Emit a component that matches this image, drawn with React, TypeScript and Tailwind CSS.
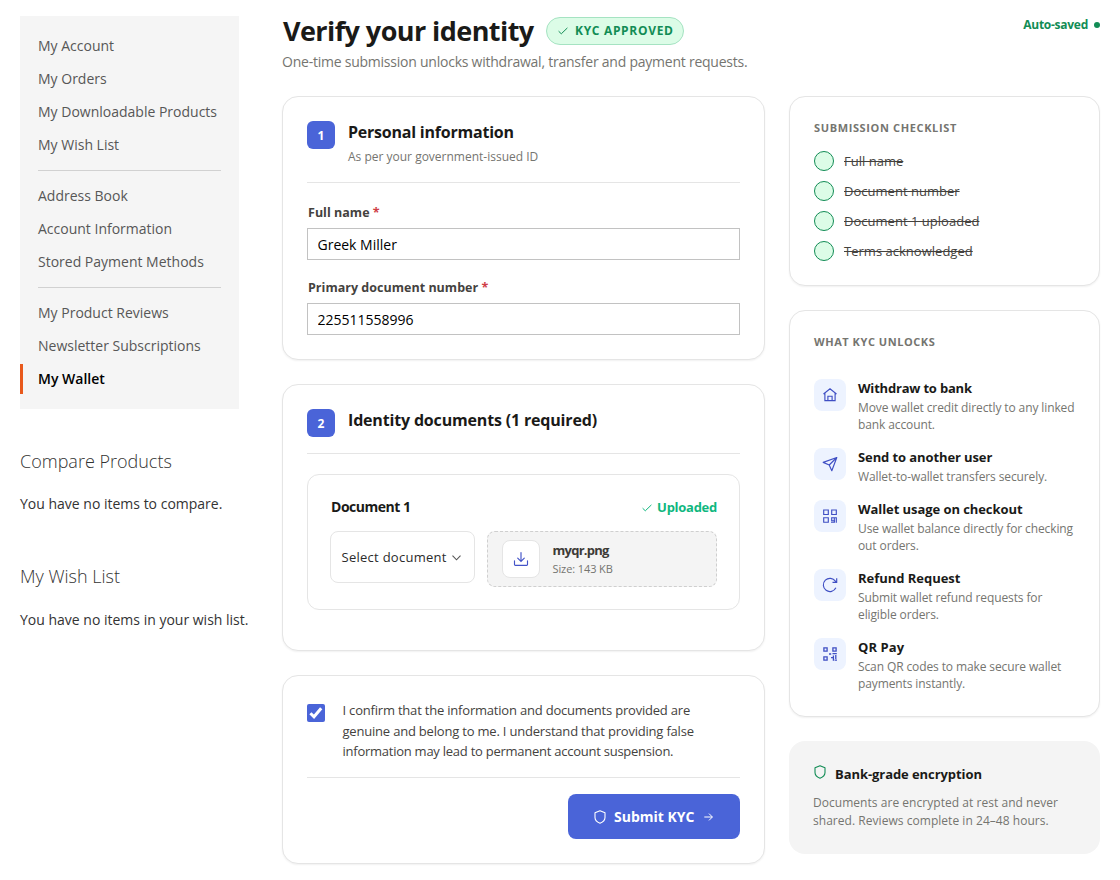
import React from 'react';

const navGroups = [
  ['My Account', 'My Orders', 'My Downloadable Products', 'My Wish List'],
  ['Address Book', 'Account Information', 'Stored Payment Methods'],
  ['My Product Reviews', 'Newsletter Subscriptions', 'My Wallet'],
];

const checklist = ['Full name', 'Document number', 'Document 1 uploaded', 'Terms acknowledged'];

const iconProps = {
  width: 16,
  height: 16,
  viewBox: '0 0 16 16',
  fill: 'none',
  stroke: 'currentColor',
  strokeWidth: 1.15,
};

const HomeIcon = () => (
  <svg {...iconProps}>
    <path d="M1.5 7 8 1.7 14.5 7M2.9 6v7.6h10.2V6M5.9 13.6V9.2h4.2v4.4" />
  </svg>
);

const SendIcon = () => (
  <svg {...iconProps} strokeLinejoin="round">
    <path d="M14.8 1.5 1.2 6.4l6 2.6 2.6 5.7zM14.8 1.5 7.2 9" />
  </svg>
);

const GridIcon = () => (
  <svg {...iconProps}>
    <path d="M1.7 2h4.6v4.5H1.7zM9.7 2h4.6v4.5H9.7zM1.7 9.7h4.6v4.6H1.7z" />
    <path d="M9.1 9.7h5.2v5.1M9.7 9.2v3.6h2.6v-3M9 14.2h3.4v-2" />
  </svg>
);

const RefundIcon = () => (
  <svg {...iconProps}>
    <path d="M13.9 10.8A6.6 6.6 0 1 1 13.4 4.2l1 1M14.7 1.2v4.1h-4.2" />
  </svg>
);

const QrIcon = () => (
  <svg {...iconProps} strokeWidth={1.3}>
    <path d="M1.9 1.9h3.2v3.2H1.9zM10.9 1.9h3.2v3.2h-3.2zM1.9 10.9h3.2v3.2H1.9z" />
    <path d="M7 8h2.2M10.5 7.7h4.3M11.4 9.4v5.4M9 11.6h2.4M13.8 9v4M12.6 14.2h2.4" />
  </svg>
);

const ShieldIcon = ({ size }: { size: number }) => (
  <svg width={size} height={size} viewBox="0 0 14 14" fill="none" stroke="currentColor" strokeWidth="1.1" strokeLinejoin="round">
    <path d="M7 .8 12 2.8v4.6c0 2.8-2 4.6-5 5.8-3-1.2-5-3-5-5.8V2.8z" />
  </svg>
);

const CheckIcon = () => (
  <svg width="10" height="8" viewBox="0 0 10 8" fill="none" stroke="currentColor">
    <path d="M.6 4.2 3.3 6.8 9.4.9" />
  </svg>
);

const unlocks = [
  { icon: HomeIcon, title: 'Withdraw to bank', tracking: 'tracking-[-0.2px]', lines: ['Move wallet credit directly to any linked', 'bank account.'] },
  { icon: SendIcon, title: 'Send to another user', tracking: 'tracking-[-0.1px]', lines: ['Wallet-to-wallet transfers securely.'] },
  { icon: GridIcon, title: 'Wallet usage on checkout', tracking: 'tracking-[-0.07px]', lines: ['Use wallet balance directly for checking', 'out orders.'] },
  { icon: RefundIcon, title: 'Refund Request', tracking: 'tracking-[-0.03px]', lines: ['Submit wallet refund requests for', 'eligible orders.'] },
  { icon: QrIcon, title: 'QR Pay', tracking: 'tracking-[0.1px]', lines: ['Scan QR codes to make secure wallet', 'payments instantly.'] },
];

const Sidebar = () => (
  <aside className="w-[262px] shrink-0 pl-5 pt-4">
    <nav className="w-[219px] bg-[#f5f5f5] py-[15px]">
      {navGroups.map((group, idx) => (
        <div key={idx}>
          {idx > 0 && <div className="mx-[18px] my-[10px] h-px bg-[#d1d1d1]" />}
          <ul className="flex flex-col gap-[3px]">
            {group.map((item) => (
              <li
                key={item}
                className={
                  item === 'My Wallet'
                    ? 'h-[30px] border-l-3 border-[#e8591c] pl-[15px] text-sm leading-[30px] font-semibold text-black'
                    : 'h-[30px] border-l-3 border-transparent pl-[15px] text-sm leading-[30px] text-[#575757]'
                }
              >
                {item}
              </li>
            ))}
          </ul>
        </div>
      ))}
    </nav>
    <section className="mt-10">
      <h2 className="text-lg leading-6 font-light text-[#333]">Compare Products</h2>
      <p className="mt-5 text-sm leading-[22px] text-[#333]">You have no items to compare.</p>
    </section>
    <section className="mt-[49px]">
      <h2 className="text-lg leading-6 font-light text-[#333]">My Wish List</h2>
      <p className="mt-[21px] text-sm leading-[22px] whitespace-nowrap text-[#333]">You have no items in your wish list.</p>
    </section>
  </aside>
);

const Step = ({ n }: { n: number }) => (
  <span className="flex size-7 shrink-0 items-center justify-center rounded-md bg-[#4a64d8] pt-px text-xs font-bold text-white">
    {n}
  </span>
);

const Field = ({ label, value }: { label: string; value: string }) => (
  <div>
    <label className="block h-[17px] pl-px text-[12.5px] leading-[17px] font-bold tracking-[0.02px] text-[#44423e]">
      {label} <span className="text-[#cf3e46]">*</span>
    </label>
    <input
      readOnly
      value={value}
      className="mt-[7px] block h-8 w-full border border-[#c2c2c2] bg-white px-[9.5px] text-sm text-black outline-none"
    />
  </div>
);

const card = 'rounded-2xl border border-[#e5e5e5] bg-white shadow-[0_1px_2px_rgba(0,0,0,0.06)]';

export default function App() {
  return (
    <div className="flex h-[880px] w-[1120px] overflow-hidden bg-white font-['Open_Sans','Noto_Sans',sans-serif]">
      <Sidebar />
      <main className="ml-5 w-[818px]">
        <header className="flex h-24 justify-between pt-4">
          <div>
            <div className="flex h-[30px] items-center gap-3">
              <h1 className="w-[252px] pl-px text-[27px] font-bold tracking-[-0.57px] whitespace-nowrap text-[#1a1a18]">Verify your identity</h1>
              <span className="flex h-7 w-[138px] items-center gap-[7px] rounded-full border border-[#a5e3c2] bg-[#dcfce7] pl-[11px] text-xs font-bold tracking-[0.68px] whitespace-nowrap text-[#128c55]">
                <CheckIcon />
                KYC APPROVED
              </span>
            </div>
            <p className="mt-[6px] text-sm leading-5 tracking-[-0.235px] text-[#757570]">
              One-time submission unlocks withdrawal, transfer and payment requests.
            </p>
          </div>
          <div className="flex h-[17px] items-center gap-[6px] text-xs font-bold tracking-[-0.27px] text-[#128c55]">
            Auto-saved
            <span className="size-[6px] rounded-full bg-[#128c55]" />
          </div>
        </header>

        <div className="flex items-start gap-6">
          <div className="flex w-[483px] flex-col gap-6">
            <section className={`${card} h-[264px] px-6 pt-6`}>
              <div className="flex h-[62px] gap-[13px] border-b border-[#e5e5e5]">
                <Step n={1} />
                <div>
                  <h3 className="text-base leading-[22px] font-bold tracking-[-0.22px] text-[#1a1a18]">Personal information</h3>
                  <p className="mt-[5px] text-xs leading-[18px] text-[#757570]">As per your government-issued ID</p>
                </div>
              </div>
              <div className="mt-[21px] flex flex-col gap-[19px]">
                <Field label="Full name" value="Greek Miller" />
                <Field label="Primary document number" value="225511558996" />
              </div>
            </section>

            <section className={`${card} h-[267px] px-6 pt-6`}>
              <div className="flex h-[45px] gap-[13px] border-b border-[#e5e5e5]">
                <Step n={2} />
                <h3 className="text-base leading-[22px] font-bold tracking-[-0.17px] text-[#1a1a18]">Identity documents (1 required)</h3>
              </div>
              <div className="mt-5 h-[136px] rounded-xl border border-[#e5e5e5] px-[22px] pt-[22px]">
                <div className="flex h-5 items-center justify-between">
                  <h4 className="pl-px text-sm font-bold tracking-[-0.48px] text-[#1a1a18]">Document 1</h4>
                  <span className="flex items-center gap-[5px] pt-px text-[13px] font-bold tracking-[-0.27px] text-[#10b77f]">
                    <CheckIcon />
                    Uploaded
                  </span>
                </div>
                <div className="mt-[14px] flex items-start gap-3">
                  <div className="flex h-[52px] w-[145px] items-center gap-[5px] rounded-lg border border-[#e5e5e5] pl-[10.5px] pt-px text-[13px] tracking-[0.27px] whitespace-nowrap text-[#2b2b2b]">
                    Select document
                    <svg width="9" height="6" viewBox="0 0 9 6" fill="none" stroke="#555" strokeWidth="1.1">
                      <path d="M.5.7 4.5 4.8 8.5.7" />
                    </svg>
                  </div>
                  <div className="flex h-14 w-[230px] items-center gap-[12.5px] rounded-lg border border-dashed border-[#cfcfcf] bg-[#f4f4f4] pl-[14px]">
                    <div className="flex size-[38px] items-center justify-center rounded-lg border border-[#e5e5e5] bg-white text-[#4353c8]">
                      <svg {...iconProps} strokeLinecap="round">
                        <path d="M8 1.5v8.8M4.7 7.2 8 10.4l3.3-3.2M1.5 9.8v3.7c0 .5.3.8.8.8h11.4c.5 0 .8-.3.8-.8V9.8" />
                      </svg>
                    </div>
                    <div className="pt-px">
                      <p className="text-[13px] leading-[17px] font-bold tracking-[-0.75px] text-[#3d3b37]">myqr.png</p>
                      <p className="mt-px text-[11px] leading-[18px] tracking-[-0.1px] text-[#757570]">Size: 143 KB</p>
                    </div>
                  </div>
                </div>
              </div>
            </section>

            <section className={`${card} h-[189px] px-6 pt-[24px]`}>
              <div className="flex h-[78px] gap-[17.5px] border-b border-[#e5e5e5]">
                <span className="mt-1 flex size-[18px] shrink-0 items-center justify-center rounded-xs bg-[#4a64d8]">
                  <svg width="14" height="12" viewBox="0 0 14 12" fill="none" stroke="#fff" strokeWidth="3">
                    <path d="M1.4 6.2 5 9.8 12.2 1.3" />
                  </svg>
                </span>
                <p className="text-[13px] leading-[20.5px] tracking-[-0.2px] whitespace-nowrap text-[#44423e]">
                  I confirm that the information and documents provided are
                  <br />
                  genuine and belong to me. I understand that providing false
                  <br />
                  <span className="tracking-[-0.25px]">information may lead to permanent account suspension.</span>
                </p>
              </div>
              <div className="mt-4 flex justify-end">
                <button className="flex h-[45px] w-[172px] items-center gap-[7px] rounded-lg bg-[#4a64d8] pl-[25px] text-sm font-bold whitespace-nowrap text-white">
                  <ShieldIcon size={14} />
                  Submit KYC
                  <svg className="ml-[3px]" width="9" height="8" viewBox="0 0 9 8" fill="none" stroke="currentColor">
                    <path d="M.3 4h8M5 .6 8.4 4 5 7.4" />
                  </svg>
                </button>
              </div>
            </section>
          </div>

          <div className="flex w-[311px] flex-col gap-6">
            <section className={`${card} h-[190px] px-6 pt-[22px]`}>
              <h4 className="text-[11px] leading-[18px] font-bold tracking-[0.63px] text-[#757570]">SUBMISSION CHECKLIST</h4>
              <ul className="mt-[14px] flex flex-col gap-[10px]">
                {checklist.map((label) => (
                  <li key={label} className="flex h-5 items-center gap-[10px]">
                    <span className="size-5 rounded-full border border-[#128c55] bg-[#dcfce7]" />
                    <span className="text-[13px] leading-5 tracking-[0.02px] text-[#44423e] line-through">{label}</span>
                  </li>
                ))}
              </ul>
            </section>

            <section className={`${card} h-[407px] px-6 pt-[22px]`}>
              <h4 className="text-[11px] leading-[18px] font-bold tracking-[0.55px] text-[#757570]">WHAT KYC UNLOCKS</h4>
              <ul className="mt-7 flex flex-col gap-[15px]">
                {unlocks.map((u) => (
                  <li key={u.title} className="flex items-start gap-3">
                    <span className="flex size-8 shrink-0 items-center justify-center rounded-lg bg-[#edf3ff] text-[#3f4fc4]">
                      <u.icon />
                    </span>
                    <div>
                      <p className={`mb-0.5 text-[13px] leading-[18px] font-bold text-[#1a1a18] ${u.tracking}`}>{u.title}</p>
                      {u.lines.map((l) => (
                        <p key={l} className="text-xs leading-[17px] tracking-[-0.11px] whitespace-nowrap text-[#757570]">{l}</p>
                      ))}
                    </div>
                  </li>
                ))}
              </ul>
            </section>

            <section className="h-[113px] rounded-2xl bg-[#f4f4f4] px-6 pt-6">
              <div className="flex h-[18px] gap-2">
                <span className="text-[#128c55]">
                  <ShieldIcon size={14} />
                </span>
                <h4 className="text-[13px] leading-[18px] font-bold tracking-[-0.07px] text-[#1a1a18]">Bank-grade encryption</h4>
              </div>
              <p className="mt-[11px] text-xs leading-[18px] tracking-[0.04px] whitespace-nowrap text-[#757570]">
                Documents are encrypted at rest and never
                <br />
                shared. Reviews complete in 24–48 hours.
              </p>
            </section>
          </div>
        </div>
      </main>
    </div>
  );
}
